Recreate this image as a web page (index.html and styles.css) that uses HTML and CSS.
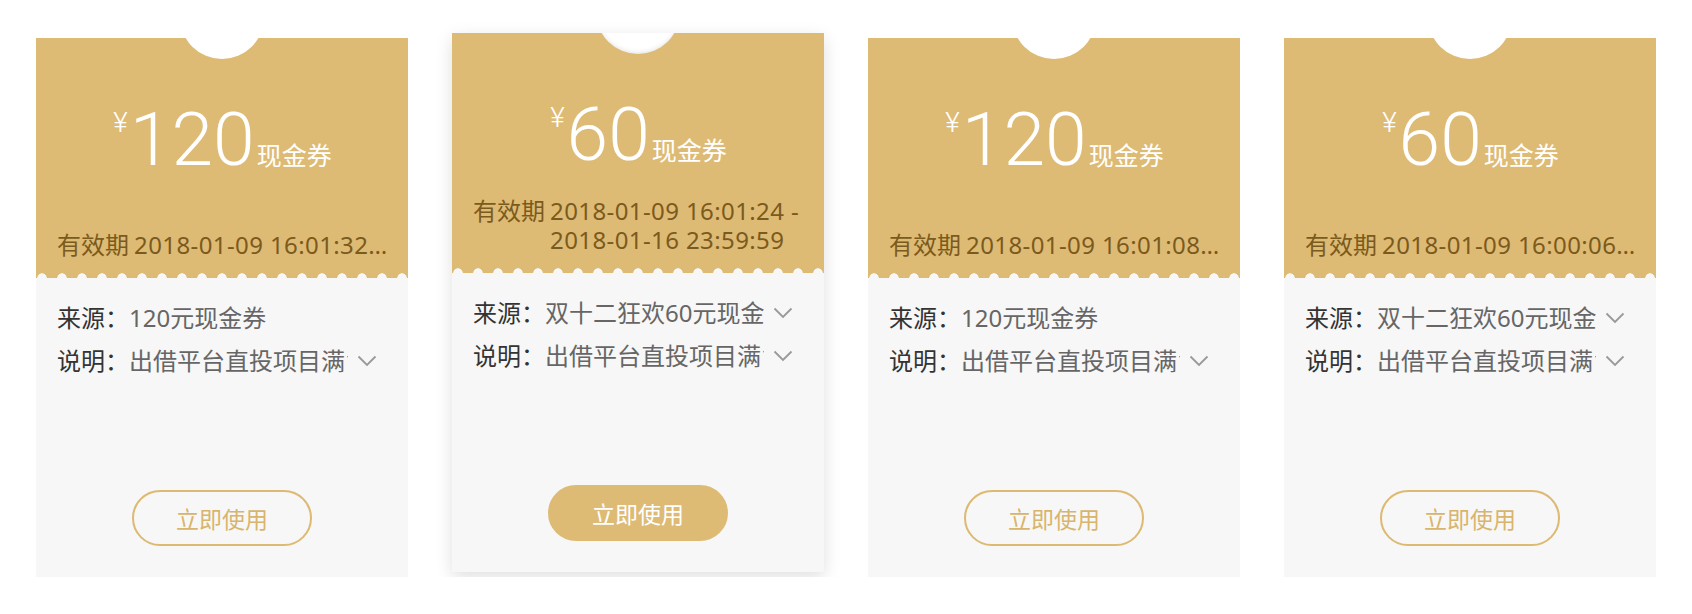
FILE: index.html
```html
<!DOCTYPE html>
<html lang="zh-CN">
<head>
<meta charset="utf-8">
<title>现金券</title>
<link rel="stylesheet" href="styles.css">
</head>
<body>
<div class="coupons">
  <div class="coupon">
    <div class="coupon-head">
      <div class="amount"><span class="cur">¥</span><span class="num">120</span><span class="unit">现金券</span></div>
      <div class="validity"><span class="v-label">有效期</span><span class="v-val">2018-01-09 16:01:32 - 2018-01-16 23:59:59</span></div>
    </div>
    <div class="coupon-body">
      <div class="row"><span class="k">来源：</span><span class="v">120元现金券</span></div>
      <div class="row"><span class="k">说明：</span><span class="v">出借平台直投项目满100元可用</span><svg class="chev" width="20" height="12" viewBox="0 0 20 12"><polyline points="1.5,1.5 10,10 18.5,1.5" fill="none" stroke="#999999" stroke-width="1.8"/></svg></div>
      <button class="use">立即使用</button>
    </div>
  </div>

  <div class="coupon active">
    <div class="coupon-head">
      <div class="amount"><span class="cur">¥</span><span class="num">60</span><span class="unit">现金券</span></div>
      <div class="validity"><span class="v-label">有效期</span><span class="v-val">2018-01-09 16:01:24 - 2018-01-16 23:59:59</span></div>
    </div>
    <div class="coupon-body">
      <div class="row"><span class="k">来源：</span><span class="v">双十二狂欢60元现金券</span><svg class="chev" width="20" height="12" viewBox="0 0 20 12"><polyline points="1.5,1.5 10,10 18.5,1.5" fill="none" stroke="#999999" stroke-width="1.8"/></svg></div>
      <div class="row"><span class="k">说明：</span><span class="v">出借平台直投项目满100元可用</span><svg class="chev" width="20" height="12" viewBox="0 0 20 12"><polyline points="1.5,1.5 10,10 18.5,1.5" fill="none" stroke="#999999" stroke-width="1.8"/></svg></div>
      <button class="use">立即使用</button>
    </div>
  </div>

  <div class="coupon">
    <div class="coupon-head">
      <div class="amount"><span class="cur">¥</span><span class="num">120</span><span class="unit">现金券</span></div>
      <div class="validity"><span class="v-label">有效期</span><span class="v-val">2018-01-09 16:01:08 - 2018-01-16 23:59:59</span></div>
    </div>
    <div class="coupon-body">
      <div class="row"><span class="k">来源：</span><span class="v">120元现金券</span></div>
      <div class="row"><span class="k">说明：</span><span class="v">出借平台直投项目满100元可用</span><svg class="chev" width="20" height="12" viewBox="0 0 20 12"><polyline points="1.5,1.5 10,10 18.5,1.5" fill="none" stroke="#999999" stroke-width="1.8"/></svg></div>
      <button class="use">立即使用</button>
    </div>
  </div>

  <div class="coupon">
    <div class="coupon-head">
      <div class="amount"><span class="cur">¥</span><span class="num">60</span><span class="unit">现金券</span></div>
      <div class="validity"><span class="v-label">有效期</span><span class="v-val">2018-01-09 16:00:06 - 2018-01-16 23:59:59</span></div>
    </div>
    <div class="coupon-body">
      <div class="row"><span class="k">来源：</span><span class="v">双十二狂欢60元现金券</span><svg class="chev" width="20" height="12" viewBox="0 0 20 12"><polyline points="1.5,1.5 10,10 18.5,1.5" fill="none" stroke="#999999" stroke-width="1.8"/></svg></div>
      <div class="row"><span class="k">说明：</span><span class="v">出借平台直投项目满100元可用</span><svg class="chev" width="20" height="12" viewBox="0 0 20 12"><polyline points="1.5,1.5 10,10 18.5,1.5" fill="none" stroke="#999999" stroke-width="1.8"/></svg></div>
      <button class="use">立即使用</button>
    </div>
  </div>
</div>
</body>
</html>
```

FILE: styles.css
```css
* { box-sizing: border-box; }

html, body {
  margin: 0;
  background: #ffffff;
}

body {
  font-family: "Noto Sans", "Noto Sans CJK SC", sans-serif;
}

.coupons {
  display: flex;
  gap: 44px;
  padding: 38px 36px 0;
  align-items: flex-start;
}

.coupon {
  width: 372px;
  height: 539px;
  display: flex;
  flex-direction: column;
  background: #f7f7f7;
}

.coupon.active {
  transform: translateY(-5px);
  box-shadow: 0 5px 16px rgba(0, 0, 0, 0.13);
}

.coupon-head {
  position: relative;
  height: 240px;
  background: #debb75;
  padding: 64px 20px 19px 21px;
  display: flex;
  flex-direction: column;
  overflow: hidden;
}

/* notch at the top */
.coupon-head::before {
  content: "";
  position: absolute;
  left: 50%;
  top: -63px;
  width: 84px;
  height: 84px;
  margin-left: -42px;
  border-radius: 50%;
  background: #ffffff;
}

.coupon.active .coupon-head::before {
  box-shadow: inset 0 -3px 5px -2px rgba(0, 0, 0, 0.12);
}

/* scalloped edge */
.coupon-head::after {
  content: "";
  position: absolute;
  left: 0;
  right: 0;
  bottom: 0;
  height: 5px;
  background-image: radial-gradient(circle at 10px 5px, #f7f7f7 4.4px, rgba(247, 247, 247, 0) 5px);
  background-size: 20px 5px;
  background-repeat: repeat-x;
  background-position: center bottom;
}

.amount {
  display: flex;
  justify-content: center;
  align-items: baseline;
  color: #ffffff;
}

.cur {
  align-self: flex-start;
  font-family: Roboto, "Noto Sans", sans-serif;
  font-weight: 300;
  font-size: 28px;
  line-height: 1;
  margin-top: 7px;
  margin-right: 2px;
}

.num {
  font-family: Roboto, "Noto Sans", sans-serif;
  font-weight: 300;
  font-size: 75px;
  line-height: 1;
}

.unit {
  font-family: "Noto Sans CJK SC", sans-serif;
  font-size: 25px;
  line-height: 1;
  margin-left: 2px;
}

.validity {
  margin-top: auto;
  display: flex;
  gap: 5px;
  font-size: 24px;
  line-height: 29px;
  color: #7b5a1d;
}

.v-label {
  flex: none;
  white-space: nowrap;
}

.v-val {
  min-width: 0;
  letter-spacing: 0.4px;
  white-space: nowrap;
  overflow: hidden;
  text-overflow: ellipsis;
}

.coupon.active .v-val {
  white-space: normal;
  overflow: visible;
}

.coupon-body {
  flex: 1;
  display: flex;
  flex-direction: column;
  padding: 18px 21px 31px;
}

.row {
  display: flex;
  align-items: center;
  font-size: 24px;
  line-height: 43px;
  height: 43px;
  white-space: nowrap;
}

.k {
  flex: none;
  width: 72px;
  color: #333333;
}

.v {
  flex: none;
  width: 219px;
  overflow: hidden;
  color: #666666;
}

.chev {
  flex: none;
  margin-left: 9px;
}

.use {
  margin-top: auto;
  align-self: center;
  width: 180px;
  height: 56px;
  border: 2px solid #ddb972;
  border-radius: 28px;
  background: transparent;
  color: #d9b46c;
  font-family: "Noto Sans CJK SC", sans-serif;
  font-size: 23px;
  padding: 0;
  cursor: pointer;
}

.coupon.active .use {
  background: #debb75;
  border-color: #debb75;
  color: #ffffff;
}
```
